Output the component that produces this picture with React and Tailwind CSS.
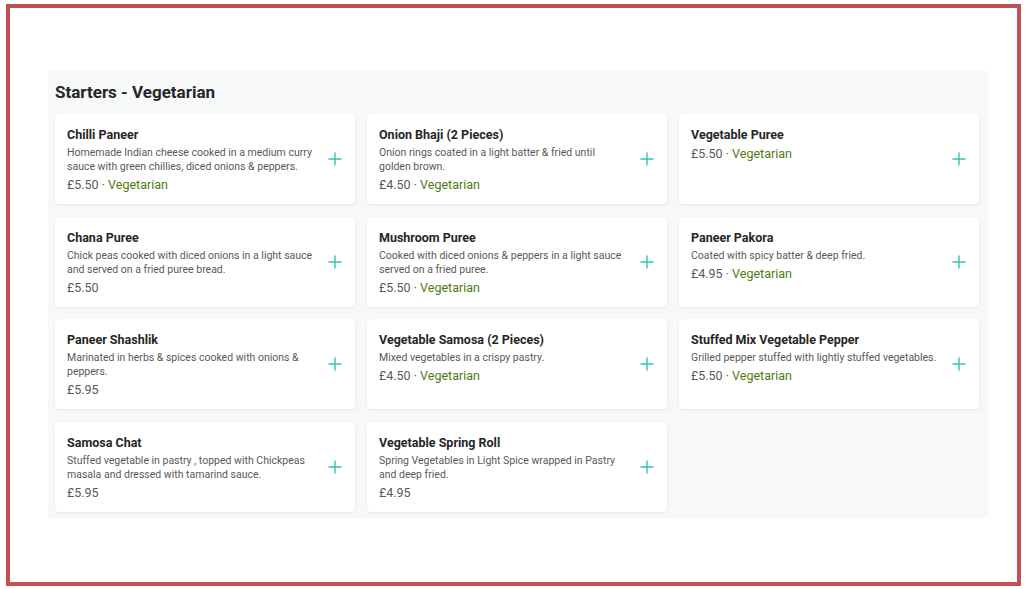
const items = [
  { name: "Chilli Paneer", desc: "Homemade Indian cheese cooked in a medium curry sauce with green chillies, diced onions & peppers.", price: "£5.50", veg: true },
  { name: "Onion Bhaji (2 Pieces)", desc: "Onion rings coated in a light batter & fried until golden brown.", price: "£4.50", veg: true },
  { name: "Vegetable Puree", desc: "", price: "£5.50", veg: true },
  { name: "Chana Puree", desc: "Chick peas cooked with diced onions in a light sauce and served on a fried puree bread.", price: "£5.50", veg: false },
  { name: "Mushroom Puree", desc: "Cooked with diced onions & peppers in a light sauce served on a fried puree.", price: "£5.50", veg: true },
  { name: "Paneer Pakora", desc: "Coated with spicy batter & deep fried.", price: "£4.95", veg: true },
  { name: "Paneer Shashlik", desc: "Marinated in herbs & spices cooked with onions & peppers.", price: "£5.95", veg: false },
  { name: "Vegetable Samosa (2 Pieces)", desc: "Mixed vegetables in a crispy pastry.", price: "£4.50", veg: true },
  { name: "Stuffed Mix Vegetable Pepper", desc: "Grilled pepper stuffed with lightly stuffed vegetables.", price: "£5.50", veg: true },
  { name: "Samosa Chat", desc: "Stuffed vegetable in pastry , topped with Chickpeas masala and dressed with tamarind sauce.", price: "£5.95", veg: false },
  { name: "Vegetable Spring Roll", desc: "Spring Vegetables in Light Spice wrapped in Pastry and deep fried.", price: "£4.95", veg: false },
];

function PlusIcon() {
  return (
    <svg width="14" height="14" viewBox="0 0 14 14" fill="none" stroke="#35c4b2" strokeWidth="1.4" className="shrink-0 mb-[7px]">
      <path d="M7 0.5v13M0.5 7h13" />
    </svg>
  );
}

function MenuCard({ item }) {
  return (
    <div className="flex items-center bg-white rounded-[4px] shadow-[0_1px_3px_rgba(0,0,0,0.08)] pl-3 pr-[13px] pt-[13px] pb-[6px] min-h-[90px]">
      <div className="flex-1 self-start pr-[13px]">
        <h3 className="text-[12.5px] font-bold leading-[16px] text-[#262626]">{item.name}</h3>
        {item.desc && (
          <p className="text-[10.5px] leading-[14px] text-[#595959] mt-[3px]">{item.desc}</p>
        )}
        <p className="text-[12.5px] leading-[18px] text-[#595959] mt-[2px]">
          {item.price}
          {item.veg && (
            <>
              {" · "}
              <span className="text-[#4f7a12]">Vegetarian</span>
            </>
          )}
        </p>
      </div>
      <PlusIcon />
    </div>
  );
}

export default function App() {
  return (
    <div className="w-[1026px] h-[589px] bg-white pt-[4px] pl-[6px] font-['Roboto',sans-serif]">
      <div className="w-[1015px] h-[582px] border-4 border-[#c24f57] bg-white pt-[63px] pl-[38px]">
        <section className="w-[940px] bg-[#f7f8f8] pl-[7px] pr-[9px] pb-[6px]">
          <h2 className="text-[17px] font-bold text-[#262626] leading-[43px]">Starters - Vegetarian</h2>
          <div className="grid grid-cols-3 gap-x-3 gap-y-[12.5px]">
            {items.map((item) => (
              <MenuCard key={item.name} item={item} />
            ))}
          </div>
        </section>
      </div>
    </div>
  );
}
